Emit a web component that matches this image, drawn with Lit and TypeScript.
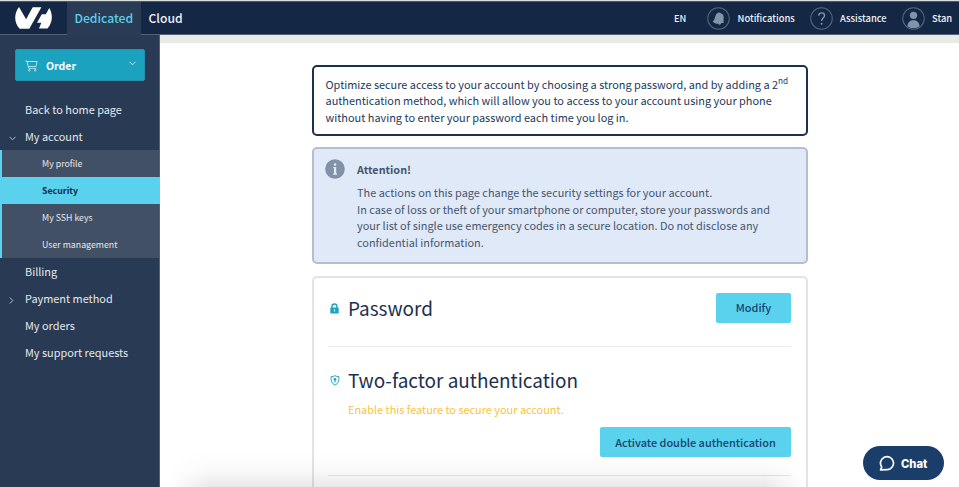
import { LitElement, html, svg, css } from "lit";
import { classMap } from "lit/directives/class-map.js";

const icons = {
  logo: html`<svg width="37" height="22" viewBox="0 0 37 22"><path fill="#fff" d="M4 0L11.100 12.300 17.700.2H26.400L14.300 21.800H4.600C-1 15.500-1.300 7 4 0ZM34.300 1C38.200 8 37.600 15.500 32.500 21.500H24L26.300 15.800H22L26.800 7.200H30.800Z"/></svg>`,
  cart: html`<svg width="13" height="12" viewBox="0 0 13 12" fill="none" stroke="#d5f3f8" stroke-width=".8"><path d="M.3 1H2l1.700 7.300h7.600M2.200 1.500h9.800l-.9 4.900H3.300"/><circle cx="4.300" cy="10.300" r=".8"/><circle cx="10.200" cy="10.300" r=".8"/></svg>`,
  down: html`<svg width="7" height="5" viewBox="0 0 7 5" fill="none" stroke="currentColor" stroke-width="1"><path d="M.5.8l3 3 3-3"/></svg>`,
  right: html`<svg width="5" height="7" viewBox="0 0 5 7" fill="none" stroke="currentColor" stroke-width="1"><path d="M.8.5l3 3-3 3"/></svg>`,
  bell: svg`<path fill="#7c95a9" d="M10.500 5.600c.7-.5 1.700-.4 2.200.2 2.300.6 3.600 2.500 3.300 5-.2 1.900-.3 3 .1 4.500l-2.500.1c-.2 1.700-2.100 2.200-3.100.7-2-.2-3.800-1-5.200-2.300 1.500-.7 1.900-2 2.300-3.700.5-2.300 1.300-3.700 2.900-4.500Z"/>`,
  help: svg`<path d="M8.300 8.200C8.500 6.500 9.600 5.600 11.100 5.600c1.700 0 2.800.9 2.800 2.500 0 2.300-2.800 2.600-2.800 5.300" fill="none" stroke="#8398ab" stroke-width="1.300"/><circle cx="11.100" cy="16" r=".9" fill="#8398ab"/>`,
  user: svg`<circle cx="11" cy="8" r="3.500" fill="#7c95a9"/><path fill="#7c95a9" d="M5.200 18.300c.3-4 2.600-5.700 5.800-5.700s5.500 1.700 5.800 5.700c-3 2.500-8.600 2.500-11.600 0Z"/>`,
  lock: html`<svg width="9" height="11" viewBox="0 0 9 11"><path d="M2 5V3.400a2.450 2.450 0 0 1 4.900 0V5" fill="none" stroke="#1fa2bf" stroke-width="1.400"/><rect x=".3" y="4.400" width="8.400" height="6.100" rx=".6" fill="#1fa2bf"/><path d="M4.500 6.300v2.300" stroke="#c5eaf1" stroke-width="1.200"/></svg>`,
  shield: html`<svg width="10" height="11" viewBox="0 0 9 11"><path d="M4.500.7C3.300 1.400 2 1.600.6 1.600.2 5.600 1.300 8.700 4.500 10.200 7.700 8.700 8.800 5.600 8.400 1.600 7 1.600 5.700 1.400 4.500.7Z" fill="none" stroke="#2baac4" stroke-width="1"/><circle cx="4.500" cy="4.200" r="1.300" fill="#1fa2bf"/><path d="M4.500 4v3.500" stroke="#1fa2bf" stroke-width="1.100"/></svg>`,
  info: html`<svg width="20" height="20" viewBox="0 0 20 20"><circle cx="10" cy="10" r="9.800" fill="#8291a5"/><circle cx="10" cy="5.500" r="1.300" fill="#e0e9f8"/><path fill="#e0e9f8" d="M8.300 8h2.900v6.600h1v1.200H8v-1.200h1V9.200h-.7Z"/></svg>`,
  chat: html`<svg width="16" height="17" viewBox="0 0 16 17"><path d="M1.600 14.900L2.700 12A6.500 6.500 0 1 1 8.300 14.700Z" fill="none" stroke="#fff" stroke-width="1.700" stroke-linejoin="round"/></svg>`,
};

const menu = [
  { label: "Back to home page" },
  { label: "My account", icon: icons.down, children: ["My profile", "Security", "My SSH keys", "User management"] },
  { label: "Billing" },
  { label: "Payment method", icon: icons.right },
  { label: "My orders" },
  { label: "My support requests" },
];

class AppRoot extends LitElement {
  static styles = css`
    :host { display: flex; flex-direction: column; position: relative; box-sizing: border-box; width: 959px; height: 487px; overflow: hidden; background: #fff; border-top: 1px solid #dcdedd; font: 10.920px/16.500px "Noto Sans CJK SC", "Noto Sans", sans-serif; color: #23395b; }
    * { box-sizing: border-box; }
    svg { display: block; flex: none; }
    .top { height: 34px; flex: none; display: flex; align-items: stretch; background: #142744; border-top: 1px solid #49586e; border-bottom: 1px solid #53627a; color: #f0f3f7; font-weight: 500; }
    .brand { width: 67px; padding: 5px 0 0 15px; }
    .tab { font-size: 12.150px; line-height: 32px; }
    .tab.active { width: 74px; padding-left: 7.500px; background: #293b55; color: #5bcfe9; height: 33px; }
    .tab.cloud { padding-left: 7.500px; }
    .tools { margin-left: auto; width: 285px; display: flex; align-items: center; font-size: 9.400px; }
    .lang { width: 33px; font-size: 9.200px; padding-top: 1px; }
    .tool { display: flex; align-items: center; gap: 7.500px; }
    .bell { width: 102.500px; }
    .help { width: 92.500px; }
    .person { gap: 7px; }
    .body { flex: 1; min-height: 0; display: flex; }
    .side { width: 160px; background: #293b54; border-right: 1px solid #53627a; padding-top: 14px; color: #e4e8ed; }
    .order { display: flex; align-items: center; width: 130px; height: 32px; margin: 0 0 15px 15px; padding: 0 8px 0 9px; background: #1ba2bf; border: 1px solid #268fae; border-radius: 2px; color: #fff; font-size: 10.500px; font-weight: 700; }
    .order span { flex: 1; padding: 2px 0 0 8px; }
    .order svg { margin-top: 2px; }
    .order .caret { margin-bottom: 5px; color: #c4eaf2; }
    .item { display: flex; align-items: center; height: 27px; }
    .mark { width: 25px; padding: 3px 0 0 9px; color: #b6bfca; }
    .sub { border-left: 2px solid #5bd2ed; background: #415064; font-size: 8.800px; }
    .leaf { height: 27px; line-height: 27px; padding-left: 40px; }
    .leaf.active { margin-right: -1px; background: #5bd2ed; color: #0f2b4b; font-weight: 700; }
    .main { flex: 1; min-width: 0; border-top: 8px solid #e9eae6; padding: 22px 0 0 152px; }
    .box { width: 495.500px; border: 2px solid #1b2f50; border-radius: 5px; }
    .intro { height: 71px; padding: 8.500px 11px 0 11.500px; }
    sup { font-size: 8.200px; line-height: 0; vertical-align: baseline; position: relative; top: -5px; }
    .notice { height: 117px; margin-top: 11px; display: flex; gap: 12px; padding: 10px 11px 0 11px; background: #e0e9f8; border: 2px solid #b3bfd1; color: #46566f; }
    .notice b { display: block; font-size: 10.800px; line-height: 20px; margin-bottom: 5px; }
    .panel { height: 230px; margin-top: 12px; padding: 14px 14.500px 0 14px; border-color: #e4e4e0; }
    .row { height: 55px; display: flex; justify-content: space-between; border-bottom: 1px solid #ececec; }
    h2 { margin: 0; display: flex; align-items: center; gap: 9.500px; height: 32px; padding-left: 1.500px; font-size: 18.950px; font-weight: 400; color: #1b2f50; }
    .factor h2 { gap: 8.500px; }
    .btn { height: 30px; line-height: 30px; text-align: center; border-radius: 2px; background: #5bd2ed; color: #16416d; font-weight: 500; }
    .modify { width: 75px; margin-top: .5px; line-height: 29px; }
    .activate { width: 191px; margin: 10px 0 0 auto; }
    .factor { height: 129px; padding-top: 17.500px; border-bottom: 1px solid #e6e6e6; }
    .warn { padding: 4px 0 0 20px; color: #fbc340; }
    .shade { position: absolute; left: 170px; right: 155px; bottom: 0; height: 36px; pointer-events: none; background: linear-gradient(to bottom, rgba(0,0,0,0), rgba(0,0,0,.025) 55%, rgba(0,0,0,.09)); -webkit-mask-image: linear-gradient(to right, transparent, #000 40px, #000 calc(100% - 40px), transparent); mask-image: linear-gradient(to right, transparent, #000 40px, #000 calc(100% - 40px), transparent); }
    .chat { position: absolute; left: 863px; bottom: 7px; width: 81px; height: 34px; border-radius: 17px; background: #1b3d69; color: #fff; display: flex; align-items: center; gap: 6px; padding: 1px 0 0 16px; font: 800 11.200px "Inter", sans-serif; }
  `;

  ring(content: unknown) {
    return html`<svg width="23" height="23" viewBox="0 0 22 22"><circle cx="11" cy="11" r="10.300" fill="none" stroke="#52677e" stroke-width="1"/>${content}</svg>`;
  }

  render() {
    return html`
      <header class="top">
        <div class="brand">${icons.logo}</div>
        <div class="tab active">Dedicated</div>
        <div class="tab cloud">Cloud</div>
        <div class="tools">
          <span class="lang">EN</span>
          <div class="tool bell">${this.ring(icons.bell)}<span>Notifications</span></div>
          <div class="tool help">${this.ring(icons.help)}<span>Assistance</span></div>
          <div class="tool person">${this.ring(icons.user)}<span>Stan</span></div>
        </div>
      </header>
      <div class="body">
        <nav class="side">
          <div class="order">${icons.cart}<span>Order</span><i class="caret">${icons.down}</i></div>
          ${menu.map((m) => html`
            <div class="item"><div class="mark">${m.icon}</div>${m.label}</div>
            ${m.children ? html`<div class="sub">${m.children.map((c) => html`<div class=${classMap({ leaf: true, active: c === "Security" })}>${c}</div>`)}</div>` : ""}
          `)}
        </nav>
        <main class="main">
          <section class="box intro">Optimize secure access to your account by choosing a strong password, and by adding a 2<sup>nd</sup><br>authentication method, which will allow you to access to your account using your phone<br>without having to enter your password each time you log in.</section>
          <section class="box notice">${icons.info}<div><b>Attention!</b>The actions on this page change the security settings for your account.<br>In case of loss or theft of your smartphone or computer, store your passwords and<br>your list of single use emergency codes in a secure location. Do not disclose any<br>confidential information.</div></section>
          <section class="box panel">
            <div class="row"><h2>${icons.lock}Password</h2><div class="btn modify">Modify</div></div>
            <div class="factor"><h2>${icons.shield}Two-factor authentication</h2><div class="warn">Enable this feature to secure your account.</div><div class="btn activate">Activate double authentication</div></div>
          </section>
        </main>
      </div>
      <div class="shade"></div>
      <div class="chat">${icons.chat}Chat</div>
    `;
  }
}
customElements.define("app-root", AppRoot);
